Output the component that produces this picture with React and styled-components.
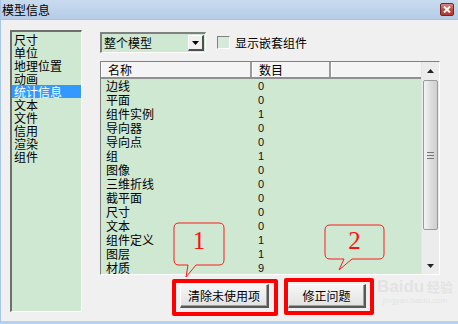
import React from 'react';
import styled, { createGlobalStyle } from 'styled-components';

const GlobalStyle = createGlobalStyle`
  html, body {
    margin: 0;
    padding: 0;
    background: #f0f0f0;
  }
  body {
    font-family: "Noto Sans CJK SC", "DejaVu Sans", sans-serif;
    font-size: 12px;
    color: #000;
  }
`;

const categories = ['尺寸', '单位', '地理位置', '动画', '统计信息', '文本', '文件', '信用', '渲染', '组件'];

const stats = [
  ['边线', 0],
  ['平面', 0],
  ['组件实例', 1],
  ['导向器', 0],
  ['导向点', 0],
  ['组', 1],
  ['图像', 0],
  ['三维折线', 0],
  ['截平面', 0],
  ['尺寸', 0],
  ['文本', 0],
  ['组件定义', 1],
  ['图层', 1],
  ['材质', 9],
];

const App = () => {
  return (
    <>
      <GlobalStyle />
      <Window>
        <TitleBar>
          <Title>模型信息</Title>
          <CloseBtn>
            <svg width="8" height="7" viewBox="0 0 8 7">
              <path d="M1 0.5 L7 6.5 M7 0.5 L1 6.5" stroke="#fff" strokeWidth="2" />
            </svg>
          </CloseBtn>
        </TitleBar>
        <Body>
          <CategoryList>
            {categories.map((c) => (
              <CategoryItem key={c} $active={c === '统计信息'}>{c}</CategoryItem>
            ))}
          </CategoryList>
          <Panel>
            <TopRow>
              <Dropdown>
                <DropText>整个模型</DropText>
                <DropArrow>
                  <svg width="7" height="4" viewBox="0 0 7 4">
                    <path d="M0 0 H7 L3.5 4 Z" fill="#000" />
                  </svg>
                </DropArrow>
              </Dropdown>
              <Checkbox />
              <CheckLabel>显示嵌套组件</CheckLabel>
            </TopRow>
            <Table>
              <TableMain>
                <HeaderRow>
                  <HeaderCell $w={151}>名称</HeaderCell>
                  <HeaderCell $w={79}>数目</HeaderCell>
                  <HeaderCell $w={91} />
                </HeaderRow>
                {stats.map(([name, n]) => (
                  <Row key={name}>
                    <NameCell>{name}</NameCell>
                    <CountCell>{n}</CountCell>
                  </Row>
                ))}
              </TableMain>
              <ScrollBar>
                <ScrollArrow>
                  <svg width="7" height="4" viewBox="0 0 7 4">
                    <path d="M0 4 H7 L3.5 0 Z" fill="#222" />
                  </svg>
                </ScrollArrow>
                <Thumb>
                  <Grip />
                </Thumb>
                <ScrollTrack />
                <ScrollArrow>
                  <svg width="7" height="4" viewBox="0 0 7 4">
                    <path d="M0 0 H7 L3.5 4 Z" fill="#222" />
                  </svg>
                </ScrollArrow>
              </ScrollBar>
            </Table>
            <ButtonRow>
              <Button $w={89}>清除未使用项</Button>
              <Button $w={78}>修正问题</Button>
            </ButtonRow>
          </Panel>
        </Body>

        <Callout $x={170} $y={221} $w={56} $h={58}>
          <svg width="56" height="58" viewBox="0 0 56 58">
            <path
              d="M8 2 H48 Q53 2 53 7 V39 Q53 44 48 44 H25 L15 56 L17 44 H8 Q3 44 3 39 V7 Q3 2 8 2 Z"
              fill="none"
              stroke="#ff1a1a"
              strokeWidth="1"
            />
          </svg>
          <CalloutNum $top={4} $left={3} $w={50}>1</CalloutNum>
        </Callout>
        <Callout $x={321} $y={223} $w={64} $h={50}>
          <svg width="64" height="50" viewBox="0 0 64 50">
            <path
              d="M8 2 H57 Q62 2 62 7 V31 Q62 36 57 36 H30 L17 47 L22 36 H8 Q3 36 3 31 V7 Q3 2 8 2 Z"
              fill="none"
              stroke="#ff1a1a"
              strokeWidth="1"
            />
          </svg>
          <CalloutNum $top={2} $left={3} $w={59}>2</CalloutNum>
        </Callout>

        <Highlight $x={171} $y={279} $w={106} $h={37} />
        <Highlight $x={283} $y={278} $w={90} $h={37} />

        <Watermark>
          <Mark>Baidu</Mark> <Mark $small>经验</Mark>
          <MarkUrl>jingyan.baidu.com</MarkUrl>
        </Watermark>
      </Window>
    </>
  );
};

const Window = styled.div`
  position: relative;
  width: 458px;
  height: 324px;
  box-sizing: border-box;
  border-left: 1px solid #a9c8e8;
  border-bottom: 3px solid #b3d2ef;
  background: #f0f0f0;
  display: flex;
  flex-direction: column;
  overflow: hidden;
`;

const TitleBar = styled.div`
  height: 20px;
  flex: none;
  display: flex;
  align-items: center;
  justify-content: space-between;
  padding: 0 3px 0 1px;
  background: linear-gradient(#c8daee, #b6cde8);
  border-bottom: 1px solid #aac2de;
  box-sizing: border-box;
`;

const Title = styled.div`
  font-size: 12px;
  line-height: 14px;
  padding-top: 1px;
  color: #000;
`;

const CloseBtn = styled.div`
  width: 14px;
  height: 13px;
  margin-right: 1px;
  box-sizing: border-box;
  border: 1px solid #6a2a28;
  border-radius: 2px;
  background: linear-gradient(#d98a7c, #c0473a 55%, #b23a2f);
  display: flex;
  align-items: center;
  justify-content: center;
`;

const Body = styled.div`
  flex: 1;
  display: flex;
  padding: 10px 0 0 9px;
`;

const CategoryList = styled.div`
  width: 72px;
  height: 282px;
  box-sizing: border-box;
  background: #cfe8d2;
  border-style: solid;
  border-width: 2px 1px 1px 2px;
  border-color: #6e6e6e #fff #fff #6e6e6e;
  padding-top: 1px;
`;

const CategoryItem = styled.div`
  height: 13px;
  line-height: 13px;
  padding-left: 2px;
  white-space: nowrap;
  background: ${(p) => (p.$active ? '#3399ff' : 'transparent')};
  color: ${(p) => (p.$active ? '#fff' : '#000')};
`;

const Panel = styled.div`
  margin-left: 18px;
  width: 340px;
  display: flex;
  flex-direction: column;
`;

const TopRow = styled.div`
  margin-top: 2px;
  height: 21px;
  display: flex;
  align-items: center;
`;

const Dropdown = styled.div`
  width: 106px;
  height: 21px;
  box-sizing: border-box;
  display: flex;
  align-items: center;
  background: #cfe8d2;
  border-style: solid;
  border-width: 2px 1px 1px 2px;
  border-color: #808080 #fff #fff #808080;
`;

const DropText = styled.div`
  flex: 1;
  padding-left: 2px;
  line-height: 16px;
`;

const DropArrow = styled.div`
  width: 16px;
  height: 16px;
  margin-right: 1px;
  box-sizing: border-box;
  background: #f0f0f0;
  border-style: solid;
  border-width: 1px 2px 2px 1px;
  border-color: #fff #505050 #505050 #fff;
  display: flex;
  align-items: center;
  justify-content: center;
`;

const Checkbox = styled.div`
  width: 13px;
  height: 13px;
  margin-left: 11px;
  box-sizing: border-box;
  background: #d6ead9;
  border-style: solid;
  border-width: 1px;
  border-color: #808080 #fff #fff #808080;
`;

const CheckLabel = styled.div`
  margin-left: 5px;
  font-size: 12px;
`;

const Table = styled.div`
  margin-top: 8px;
  height: 214px;
  box-sizing: border-box;
  border-style: solid;
  border-width: 1px;
  border-color: #808080 #fff #fff #808080;
  background: #cfe8d2;
  display: flex;
  overflow: hidden;
`;

const TableMain = styled.div`
  flex: 1;
  overflow: hidden;
`;

const HeaderRow = styled.div`
  display: flex;
  height: 17px;
  background: #f4f4f4;
  border-bottom: 2px solid #909090;
  box-sizing: border-box;
`;

const HeaderCell = styled.div`
  width: ${(p) => p.$w}px;
  flex: none;
  box-sizing: border-box;
  padding-left: 6px;
  line-height: 15px;
  border-right: 2px solid #9a9a9a;
  border-left: 1px solid #fff;
  &:last-child {
    border-right: none;
    flex: 1;
  }
`;

const Row = styled.div`
  display: flex;
  height: 14px;
  line-height: 14px;
`;

const NameCell = styled.div`
  width: 151px;
  padding-left: 5px;
  box-sizing: border-box;
  white-space: nowrap;
`;

const CountCell = styled.div`
  padding-left: 6px;
  font-family: "Liberation Sans", Arial, sans-serif;
  font-size: 11px;
  color: #111;
`;

const ScrollBar = styled.div`
  width: 17px;
  flex: none;
  background: #ececec;
  display: flex;
  flex-direction: column;
  border-left: 1px solid #e4e4e4;
`;

const ScrollArrow = styled.div`
  height: 17px;
  flex: none;
  display: flex;
  align-items: center;
  justify-content: center;
`;

const Thumb = styled.div`
  height: 150px;
  margin: 1px 1px 0 1px;
  box-sizing: border-box;
  border: 1px solid #9a9a9a;
  border-radius: 2px;
  background: linear-gradient(90deg, #f4f4f4, #dcdcdc 55%, #cfcfcf);
  display: flex;
  align-items: center;
  justify-content: center;
`;

const Grip = styled.div`
  width: 7px;
  height: 5px;
  border-top: 1px solid #777;
  border-bottom: 1px solid #777;
  position: relative;
  &::after {
    content: '';
    position: absolute;
    left: 0;
    right: 0;
    top: 2px;
    border-top: 1px solid #777;
  }
`;

const ScrollTrack = styled.div`
  flex: 1;
`;

const ButtonRow = styled.div`
  display: flex;
  gap: 19px;
  margin-top: 9px;
  padding-left: 80px;
`;

const Button = styled.div`
  width: ${(p) => p.$w}px;
  height: 24px;
  box-sizing: border-box;
  background: linear-gradient(#f6f6f6, #e2e2e2);
  border-style: solid;
  border-width: 1px 2px 2px 1px;
  border-color: #fff #585858 #585858 #fff;
  box-shadow: inset -1px -1px 0 #a0a0a0;
  display: flex;
  align-items: center;
  justify-content: center;
  font-size: 12px;
`;

const Callout = styled.div`
  position: absolute;
  left: ${(p) => p.$x}px;
  top: ${(p) => p.$y}px;
  width: ${(p) => p.$w}px;
  height: ${(p) => p.$h}px;
  svg {
    position: absolute;
    left: 0;
    top: 0;
  }
`;

const CalloutNum = styled.div`
  position: absolute;
  top: ${(p) => p.$top}px;
  left: ${(p) => p.$left}px;
  width: ${(p) => p.$w}px;
  text-align: center;
  font-family: "Liberation Serif", "Times New Roman", serif;
  font-size: 25px;
  line-height: 32px;
  color: #ff1010;
`;

const Highlight = styled.div`
  position: absolute;
  left: ${(p) => p.$x}px;
  top: ${(p) => p.$y}px;
  width: ${(p) => p.$w}px;
  height: ${(p) => p.$h}px;
  box-sizing: border-box;
  border: 4px solid #ff0000;
  border-radius: 2px;
`;

const Watermark = styled.div`
  position: absolute;
  left: 376px;
  top: 278px;
  width: 80px;
  pointer-events: none;
  color: rgba(195, 195, 195, 0.3);
  white-space: nowrap;
  line-height: 18px;
`;

const Mark = styled.span`
  font-size: ${(p) => (p.$small ? 13 : 17)}px;
  font-weight: bold;
  font-family: ${(p) => (p.$small ? '"Noto Sans CJK SC", sans-serif' : '"Liberation Sans", Arial, sans-serif')};
`;

const MarkUrl = styled.div`
  font-size: 8px;
  line-height: 10px;
  padding-left: 6px;
  font-family: "Liberation Sans", Arial, sans-serif;
`;

export default App;
